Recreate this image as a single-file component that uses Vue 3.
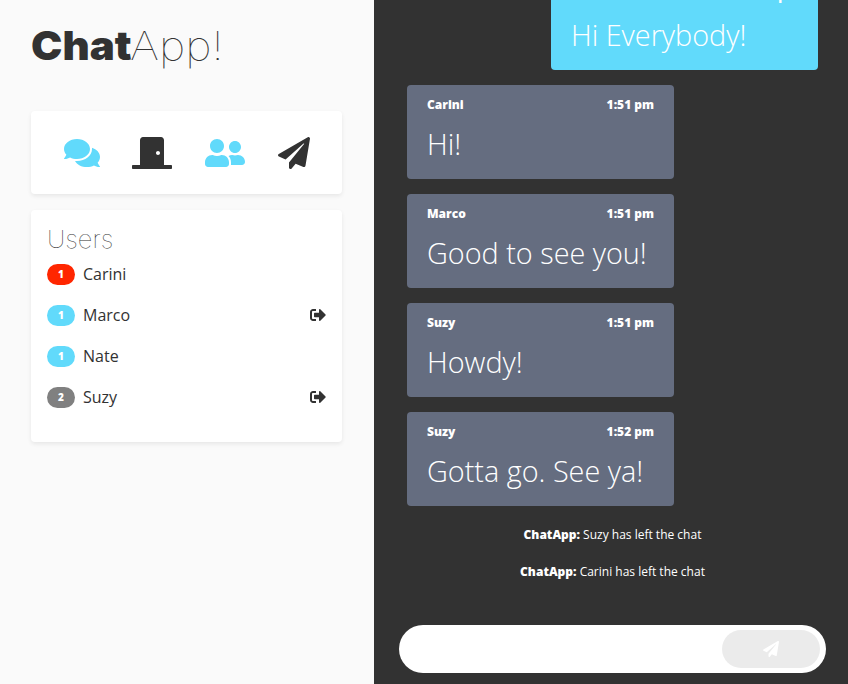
<script setup>
const comments = 'M416 192c0-88.4-93.1-160-208-160S0 103.6 0 192c0 34.3 14.1 65.9 38 92-13.4 30.2-35.5 54.2-35.8 54.5-2.2 2.3-2.8 5.7-1.5 8.7S4.8 352 8 352c36.6 0 66.9-12.3 88.7-25 32.2 15.7 70.3 25 111.3 25 114.9 0 208-71.6 208-160zm122 220c23.9-26 38-57.7 38-92 0-66.9-53.5-124.2-129.3-148.1.9 6.6 1.3 13.3 1.3 20.1 0 105.9-107.7 192-240 192-10.8 0-21.3-.8-31.7-1.9C207.8 439.6 281.8 480 368 480c41 0 79.1-9.2 111.3-25 21.8 12.7 52.1 25 88.7 25 3.2 0 6.1-1.9 7.3-4.8 1.3-2.9.7-6.3-1.5-8.7-.3-.3-22.4-24.2-35.8-54.5z'
const door = 'M624 448H512V50.8C512 22.78 490.47 0 464 0H175.99c-26.47 0-48 22.78-48 50.8V448H16c-8.84 0-16 7.16-16 16v32c0 8.84 7.16 16 16 16h608c8.84 0 16-7.16 16-16v-32c0-8.84-7.16-16-16-16zM415.99 288c-17.67 0-32-14.33-32-32s14.33-32 32-32 32 14.33 32 32c.01 17.67-14.32 32-32 32z'
const friends = 'M192 256c61.9 0 112-50.1 112-112S253.9 32 192 32 80 82.1 80 144s50.1 112 112 112zm76.8 32h-8.3c-20.8 10-43.9 16-68.5 16s-47.6-6-68.5-16h-8.3C51.6 288 0 339.6 0 403.2V432c0 26.5 21.5 48 48 48h288c26.5 0 48-21.5 48-48v-28.8c0-63.6-51.6-115.2-115.2-115.2zM480 256c53 0 96-43 96-96s-43-96-96-96-96 43-96 96 43 96 96 96zm48 32h-3.8c-13.9 4.8-28.6 8-44.2 8s-30.3-3.2-44.2-8H432c-20.4 0-39.2 5.9-55.7 15.4 24.4 26.3 39.7 61.2 39.7 99.8v38.4c0 2.2-.5 4.3-.6 6.4H592c26.5 0 48-21.5 48-48 0-61.9-50.1-112-112-112z'
const plane = 'M476 3.2L12.5 270.6c-18.1 10.4-15.8 35.6 2.2 43.2L121 358.4l287.3-253.2c5.5-4.9 13.3 2.6 8.6 8.3L176 407v80.5c0 23.6 28.5 32.9 42.5 15.8L282 426l124.6 52.2c14.2 6 30.4-2.9 33-18.2l72-432C515 7.8 493.3-6.8 476 3.2z'
const signOut = 'M497 273L329 441c-15 15-41 4.5-41-17v-96H152c-13.3 0-24-10.7-24-24v-96c0-13.3 10.7-24 24-24h136V88c0-21.4 25.9-32 41-17l168 168c9.3 9.4 9.3 24.6 0 34zM192 436v-40c0-6.6-5.4-12-12-12H96c-17.7 0-32-14.3-32-32V160c0-17.7 14.3-32 32-32h84c6.6 0 12-5.4 12-12V76c0-6.6-5.4-12-12-12H96c-53 0-96 43-96 96v192c0 53 43 96 96 96h84c6.6 0 12-5.4 12-12z'

const tools = [
  { name: 'chat', path: comments, box: 576, active: true },
  { name: 'rooms', path: door, box: 640, active: false },
  { name: 'users', path: friends, box: 640, active: true },
  { name: 'send', path: plane, box: 512, active: false }
]
const users = [
  { name: 'Carini', count: 1, tone: 'red', left: false },
  { name: 'Marco', count: 1, tone: 'blue', left: true },
  { name: 'Nate', count: 1, tone: 'blue', left: false },
  { name: 'Suzy', count: 2, tone: 'gray', left: true }
]
const messages = [
  { from: '', time: '1:51 pm', text: 'Hi Everybody!', own: true },
  { from: 'Carini', time: '1:51 pm', text: 'Hi!' },
  { from: 'Marco', time: '1:51 pm', text: 'Good to see you!' },
  { from: 'Suzy', time: '1:51 pm', text: 'Howdy!' },
  { from: 'Suzy', time: '1:52 pm', text: 'Gotta go. See ya!' }
]
const notices = ['Suzy has left the chat', 'Carini has left the chat']
</script>

<template>
  <div class="app">
    <aside class="side">
      <h1 class="logo"><span class="bold">Chat</span><span class="thin">App!</span></h1>
      <nav class="card tools">
        <svg v-for="t in tools" :key="t.name" class="tool" :class="{ active: t.active }" :viewBox="`0 0 ${t.box} 512`" :width="t.box / 16" height="32"><path :d="t.path" /></svg>
      </nav>
      <section class="card users">
        <h2>Users</h2>
        <div v-for="u in users" :key="u.name" class="user">
          <span class="badge" :class="u.tone">{{ u.count }}</span>
          <span class="name">{{ u.name }}</span>
          <svg v-if="u.left" class="out" viewBox="0 0 512 512"><path :d="signOut" /></svg>
        </div>
      </section>
    </aside>
    <main class="chat">
      <div class="feed">
        <article v-for="(m, i) in messages" :key="i" class="msg" :class="{ own: m.own }">
          <header><span>{{ m.from }}</span><span>{{ m.time }}</span></header>
          <p>{{ m.text }}</p>
        </article>
        <div v-for="n in notices" :key="n" class="notice"><b>ChatApp:</b> {{ n }}</div>
      </div>
      <form class="composer" @submit.prevent>
        <input type="text" aria-label="Message" />
        <button type="submit" aria-label="Send"><svg viewBox="0 0 512 512"><path :d="plane" /></svg></button>
      </form>
    </main>
  </div>
</template>

<style>
body { margin: 0; overflow: hidden; }
</style>

<style scoped>
* { box-sizing: border-box; }
.app { display: flex; width: 848px; height: 684px; overflow: hidden; font-family: "Open Sans", sans-serif; color: #323232; background: #fafafa; }
.side { width: 374px; padding: 22px 32px 0 31px; }
.logo { display: flex; margin: 0 0 41px; height: 48px; font: 400 40px/48px Inter, sans-serif; white-space: nowrap; }
.bold { width: 99px; font-weight: 900; transform: scaleX(1.05); transform-origin: left; }
.thin { font-weight: 100; transform: scaleX(1.13); transform-origin: left; }
.card { background: #fff; border-radius: 4px; box-shadow: 0 2px 4px rgba(0, 0, 0, 0.08); }
.tools { display: flex; justify-content: space-between; align-items: center; height: 83px; margin-bottom: 16px; padding: 0 32px 0 32.5px; }
.tool { fill: #323232; }
.tool.active { fill: #61dafb; }
.users { height: 232px; padding: 14px 16px; }
.users h2 { margin: 0 0 4px; height: 30px; font: 100 24px/31px Inter, sans-serif; transform: scaleX(1.06); transform-origin: left; }
.user { display: flex; align-items: center; height: 32px; margin-bottom: 9px; font-size: 16px; }
.badge { width: 28px; height: 21px; margin-right: 8px; border-radius: 11px; color: #fff; font-size: 10px; font-weight: 800; line-height: 21px; text-align: center; }
.red { background: #ff2600; }
.blue { background: #61dafb; }
.gray { background: #808080; }
.name { flex: 1; line-height: 24px; }
.out { width: 16px; height: 16px; fill: #323232; }
.chat { display: flex; flex-direction: column; flex: 1; background: #323232; color: #fff; }
.feed { display: flex; flex-direction: column; justify-content: flex-end; height: 625px; padding: 0 30px 30px 33px; overflow: hidden; }
.msg { flex: none; width: 267px; height: 94px; margin-bottom: 15px; padding: 10px 20px; border-radius: 4px; background: #656d80; }
.msg.own { align-self: flex-end; background: #61dafb; }
.msg header { display: flex; justify-content: space-between; height: 20px; font-size: 12px; font-weight: 800; line-height: 20px; }
.msg p { margin: 9px 0 0; font-size: 28.8px; font-weight: 300; line-height: 40px; white-space: nowrap; }
.notice { flex: none; height: 37px; font-size: 12px; line-height: 27px; text-align: center; }
.notice b { font-weight: 800; }
.composer { display: flex; align-items: center; width: 427px; height: 48px; margin-left: 25px; padding: 5px 6px 5px 24px; border-radius: 24px; background: #fff; }
.composer input { flex: 1; min-width: 0; border: 0; outline: 0; background: transparent; font-size: 16px; }
.composer button { display: flex; align-items: center; justify-content: center; width: 98px; height: 38px; padding: 0; border: 0; border-radius: 19px; background: #ebebeb; }
.composer button svg { width: 16px; height: 16px; fill: #fff; }
</style>
